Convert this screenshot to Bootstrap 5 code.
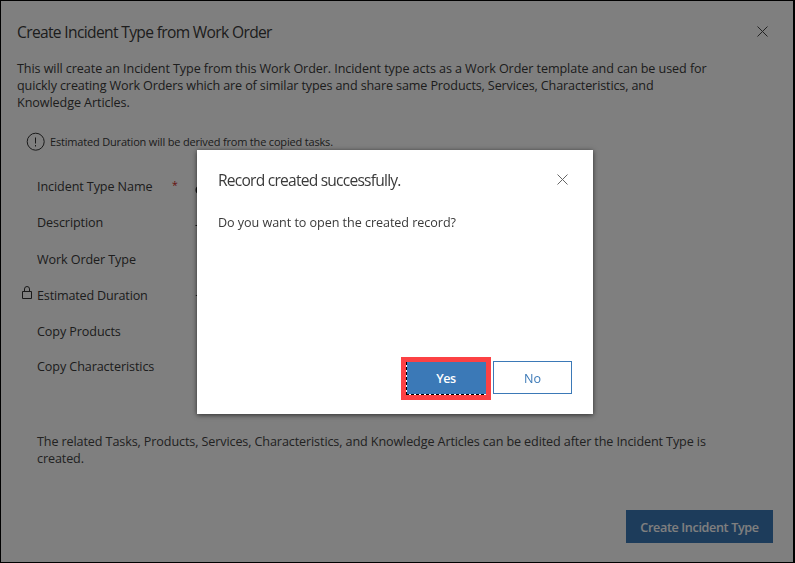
<!DOCTYPE html>
<html lang="en">
<head>
<meta charset="utf-8">
<meta name="viewport" content="width=device-width, initial-scale=1">
<title>Create Incident Type from Work Order</title>
<link href="https://cdn.jsdelivr.net/npm/bootstrap@5.3.0/dist/css/bootstrap.min.css" rel="stylesheet">
<style>
body{font-family:"Open Sans","Noto Sans",sans-serif;font-size:12.6px;line-height:17px;letter-spacing:-.1px;color:#3a3a3a;background:#fff}
.shell{height:563px;padding:0 22px 20px 17px}
.shell-head{height:49px;padding-top:21px}
.shell-head svg{margin:5px 5px 0 0}
.ttl{font-size:15.6px;line-height:22px;font-weight:400;letter-spacing:-.66px}
.intro{margin-top:11px;letter-spacing:-.085px}
.intro .second{letter-spacing:-.132px}
.note{font-size:11px;letter-spacing:-.18px;margin:21px 0 0 9px;height:20px}
.note span{margin-top:-1px}
.fields{margin:26px 0 0 5px;height:216px}
.field{height:36px}
.field.taller{height:37px}
.field.shorter{height:35px}
.lock-slot{width:15px}
.lock-slot svg{display:block;margin-top:-1px}
.name{width:135px}
.name.tight{letter-spacing:-.18px}
.req{color:#c22;font-size:10.5px;line-height:14px;width:23px}
.after{margin:39px 0 0 20px;color:#444;letter-spacing:-.115px}
.btn-flat{--bs-btn-border-radius:0;--bs-btn-padding-y:0;--bs-btn-padding-x:0;--bs-btn-font-size:12.6px;--bs-btn-bg:#3b79b7;--bs-btn-border-color:#3b79b7;--bs-btn-color:#fff;height:33px;line-height:33px}
.create{width:147px;font-weight:600;letter-spacing:-.35px}
.veil{background:rgba(0,0,0,.5)}
.frame{border:1px solid #000;border-right-width:2px;pointer-events:none}
.dlg{left:197px;top:150px;width:396px;height:264px;background:#fff;box-shadow:0 1px 5px rgba(0,0,0,.65);padding:19px 21px 14px 21px}
.dlg-head{height:45px}
.dlg-head svg{margin:5px 4px 0 0}
.dlg-head .ttl{letter-spacing:-.78px}
.ask{letter-spacing:-.06px}
.yes-mark{border:5px solid #fc4144;width:90px;height:43px}
.yes-mark .btn{width:80px;--bs-btn-border-width:0;display:block;font-weight:600;position:relative;letter-spacing:-.4px}
.yes-mark .btn::before{content:"";position:absolute;left:0;top:0;bottom:0;width:1px;background:repeating-linear-gradient(#000 0 3px,#fff 3px 5px)}
.yes-mark .btn::after{content:"";position:absolute;left:0;right:0;bottom:0;height:1px;background:repeating-linear-gradient(90deg,#000 0 3px,#fff 3px 5px)}
.no{width:79px;margin:4px 0 6px 2px;letter-spacing:0;--bs-btn-bg:#fff;--bs-btn-color:#3b79b7}
</style>
</head>
<body>
<main class="shell d-flex flex-column">
  <header class="shell-head d-flex justify-content-between">
    <h1 class="ttl mb-0">Create Incident Type from Work Order</h1>
    <svg width="11" height="11" viewBox="0 0 11 11" stroke="#444" fill="none"><path d="M.5.5l10 10M10.500.5l-10 10"/></svg>
  </header>
  <p class="intro mb-0 text-nowrap">This will create an Incident Type from this Work Order. Incident type acts as a Work Order template and can be used for<br><span class="second">quickly creating Work Orders which are of similar types and share same Products, Services, Characteristics, and</span><br>Knowledge Articles.</p>
  <div class="note d-flex align-items-center"><svg width="20" height="20" viewBox="0 0 20 20" fill="none" stroke="#333"><circle cx="9.700" cy="9.700" r="8.500"/><path d="M9.500 5.500v6M9.500 13v1.500"/></svg><span class="ms-1">Estimated Duration will be derived from the copied tasks.</span></div>
  <div class="fields">
    <div class="field d-flex"><span class="lock-slot"></span><span class="name">Incident Type Name</span><span class="req">*</span><svg width="8" height="17" viewBox="0 0 8 17"><circle cx="4.500" cy="12" r="3" fill="none" stroke="#222" stroke-width="2"/></svg></div>
    <div class="field taller d-flex"><span class="lock-slot"></span><span class="name">Description</span><span class="req"></span><svg width="8" height="17" viewBox="0 0 8 17"><path d="M.5 11.500h6" stroke="#222"/></svg></div>
    <div class="field d-flex"><span class="lock-slot"></span><span class="name">Work Order Type</span></div>
    <div class="field d-flex"><span class="lock-slot"><svg width="12" height="14" viewBox="0 0 12 14" fill="none" stroke="#333"><path d="M.5 5.500h9v7H.500zM2.500 5.500V3a2.500 2.500 0 0 1 5 0v2.500"/></svg></span><span class="name tight">Estimated Duration</span><span class="req"></span><svg width="8" height="17" viewBox="0 0 8 17"><path d="M.8 8.500h6" stroke="#333"/></svg></div>
    <div class="field shorter d-flex"><span class="lock-slot"></span><span class="name">Copy Products</span></div>
    <div class="field d-flex"><span class="lock-slot"></span><span class="name">Copy Characteristics</span></div>
  </div>
  <p class="after mb-0 text-nowrap">The related Tasks, Products, Services, Characteristics, and Knowledge Articles can be edited after the Incident Type is<br>created.</p>
  <div class="mt-auto d-flex justify-content-end"><button class="btn btn-flat create">Create Incident Type</button></div>
</main>
<div class="veil position-fixed top-0 start-0 w-100 h-100"></div>
<section class="dlg position-absolute d-flex flex-column" role="dialog">
  <div class="dlg-head d-flex justify-content-between"><h2 class="ttl mb-0">Record created successfully.</h2><svg width="11" height="11" viewBox="0 0 11 11" stroke="#666" fill="none"><path d="M.5.5l10 10M10.500.5l-10 10"/></svg></div>
  <p class="ask mb-0">Do you want to open the created record?</p>
  <div class="mt-auto d-flex justify-content-end"><div class="yes-mark"><button class="btn btn-flat">Yes</button></div><button class="btn btn-flat no">No</button></div>
</section>
<div class="frame position-fixed top-0 start-0 w-100 h-100"></div>
<script src="https://cdn.jsdelivr.net/npm/bootstrap@5.3.0/dist/js/bootstrap.bundle.min.js"></script>
</body>
</html>
